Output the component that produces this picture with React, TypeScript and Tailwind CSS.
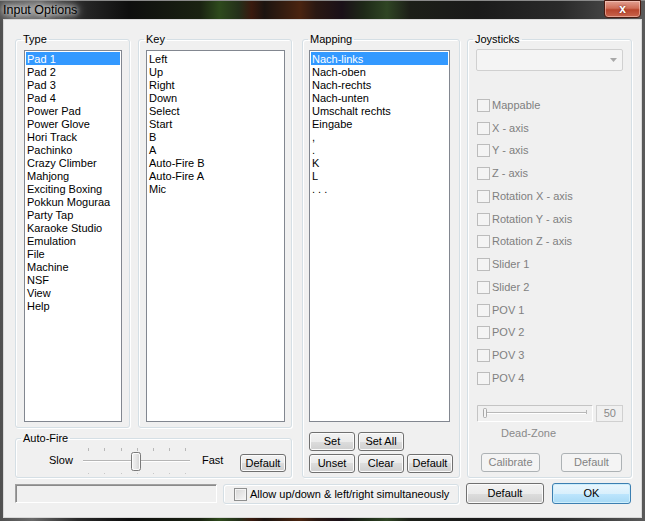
import React from "react";

const typeItems = [
  "Pad 1", "Pad 2", "Pad 3", "Pad 4", "Power Pad", "Power Glove", "Hori Track", "Pachinko",
  "Crazy Climber", "Mahjong", "Exciting Boxing", "Pokkun Moguraa", "Party Tap", "Karaoke Studio",
  "Emulation", "File", "Machine", "NSF", "View", "Help",
];
const keyItems = ["Left", "Up", "Right", "Down", "Select", "Start", "B", "A", "Auto-Fire B", "Auto-Fire A", "Mic"];
const mapItems = ["Nach-links", "Nach-oben", "Nach-rechts", "Nach-unten", "Umschalt rechts", "Eingabe", ",", ".", "K", "L", ". . ."];
const joyItems = [
  "Mappable", "X - axis", "Y - axis", "Z - axis", "Rotation X - axis", "Rotation Y - axis",
  "Rotation Z - axis", "Slider 1", "Slider 2", "POV 1", "POV 2", "POV 3", "POV 4",
];

function Group({ label, className, children }: { label?: string; className: string; children?: React.ReactNode }) {
  return (
    <fieldset className={`rounded-[3px] border border-[#d5dfe5] shadow-[inset_1px_1px_0_#ffffff,1px_1px_0_#ffffff] ${className}`}>
      {label ? <legend className="ml-[5px] px-[2px] text-[11px] leading-[13px] text-black">{label}</legend> : null}
      {children}
    </fieldset>
  );
}

function ListBox({ items, className, selected }: { items: string[]; className: string; selected?: number }) {
  return (
    <div className={`border border-[#828790] bg-white px-[1px] pt-[1px] ${className}`}>
      {items.map((t, i) => (
        <div
          key={i}
          className={`h-[13px] whitespace-nowrap pl-[1px] pt-[1px] text-[11px] leading-[12px] ${
            i === selected ? "bg-[#3399ff] text-white" : "text-black"
          }`}
        >
          {t}
        </div>
      ))}
    </div>
  );
}

function Btn({ children, className, disabled, primary }: { children: React.ReactNode; className: string; disabled?: boolean; primary?: boolean }) {
  let look =
    "border-[#707070] bg-[linear-gradient(#f2f2f2_0%,#ebebeb_50%,#dddddd_50%,#cfcfcf_100%)] shadow-[inset_0_0_0_1px_#fbfbfb] text-black";
  if (disabled) look = "border-[#adb2b5] bg-[#f4f4f4] text-[#838383]";
  if (primary)
    look =
      "border-[#3c7fb1] bg-[linear-gradient(#eaf6fd_0%,#d9f0fc_50%,#bee6fd_50%,#a7d9f5_100%)] shadow-[inset_0_0_0_1px_#cdeefc] text-black";
  return (
    <div className={`flex shrink-0 items-center justify-center rounded-[3px] border text-[11px] leading-[13px] ${look} ${className}`}>
      {children}
    </div>
  );
}

function Check({ disabled }: { disabled?: boolean }) {
  return (
    <div
      className={`h-[13px] w-[13px] shrink-0 border ${
        disabled
          ? "border-[#bcbcbc] bg-[#f4f4f4]"
          : "border-[#8e8f8f] bg-[linear-gradient(135deg,#d6d6d6,#f7f7f7)] shadow-[inset_0_0_0_1px_#f4f4f4]"
      }`}
    />
  );
}

function AutoFireSlider() {
  const ticks = [5, 21, 38, 54, 70, 86, 102];
  return (
    <svg width="107" height="30" viewBox="0 0 107 30" className="shrink-0">
      <defs>
        <linearGradient id="thumb" x1="0" y1="0" x2="1" y2="0">
          <stop offset="0" stopColor="#f4f4f4" />
          <stop offset="0.5" stopColor="#e6e6e6" />
          <stop offset="1" stopColor="#cfcfcf" />
        </linearGradient>
      </defs>
      {ticks.map((x) => (
        <line key={"t" + x} x1={x + 0.5} y1="3" x2={x + 0.5} y2="6" stroke="#b8b8b8" strokeWidth="1" />
      ))}
      {ticks.map((x) => (
        <line key={"b" + x} x1={x + 0.5} y1="28" x2={x + 0.5} y2="29" stroke="#c8c8c8" strokeWidth="1" />
      ))}
      <line x1="0" y1="15.5" x2="107" y2="15.5" stroke="#b5b5b5" strokeWidth="1" />
      <line x1="0" y1="16.5" x2="107" y2="16.5" stroke="#ffffff" strokeWidth="1" />
      <rect x="48.5" y="7.5" width="9" height="18" rx="2" fill="url(#thumb)" stroke="#7a7a7a" strokeWidth="1" />
      <rect x="49.5" y="8.5" width="7" height="16" rx="1.5" fill="none" stroke="#fbfbfb" strokeWidth="1" />
    </svg>
  );
}

function DeadZoneSlider() {
  return (
    <svg width="116" height="17" viewBox="0 0 116 17" className="shrink-0">
      <path d="M0.5 16.5 V0.5 H115.5" fill="none" stroke="#c4c4c4" strokeWidth="1" />
      <path d="M0.5 16.5 H115.5 V0.5" fill="none" stroke="#ffffff" strokeWidth="1" />
      <line x1="10" y1="7.5" x2="109" y2="7.5" stroke="#b8b8b8" strokeWidth="1" />
      <line x1="10" y1="8.5" x2="109" y2="8.5" stroke="#ffffff" strokeWidth="1" />
      <line x1="109.5" y1="5" x2="109.5" y2="9" stroke="#b8b8b8" strokeWidth="1" />
      <rect x="6.5" y="3.5" width="3" height="9" rx="1" fill="#f4f4f4" stroke="#a8a8a8" strokeWidth="1" />
    </svg>
  );
}

export default function App() {
  return (
    <div className="h-[521px] w-[645px] overflow-hidden bg-[#f0f0f0] font-['Liberation_Sans',Arial,sans-serif]">
      <div className="flex h-full w-full flex-col bg-[linear-gradient(90deg,#505050_0%,#6a6a6a_5%,#2a2a2a_12%,#0e0e0e_20%,#1a2212_31%,#2e4a1c_34%,#24301a_37%,#3a1a0e_39%,#1c1410_41%,#4a2410_46.5%,#2a1812_49%,#1a1018_53%,#1e2a18_56.5%,#2f4524_60%,#1c1f18_63.5%,#1a1a1a_74%,#2a2a2a_87%,#5a5a5a_100%)]">
        {/* Title bar */}
        <div className="flex h-[19px] shrink-0 items-start justify-between border-t border-[#8a8a8a]">
          <div className="pl-[3px] pt-[2px] text-[12.5px] leading-[15px] text-black [text-shadow:0_0_5px_#ffffff,0_0_9px_#ffffff,0_0_12px_rgba(255,255,255,0.8)]">
            Input Options
          </div>
          <div className="mr-[4px] mt-[-1px] flex h-[18px] w-[37px] items-center justify-center rounded-b-[4px] border border-[#4a1a10] bg-[linear-gradient(#e2a092_0%,#cf6e58_45%,#b8452d_55%,#c9654d_100%)] shadow-[inset_0_0_0_1px_rgba(255,220,210,0.5)]">
            <span className="text-[12px] font-bold leading-[12px] text-white [text-shadow:0_0_2px_#5a1a10]">x</span>
          </div>
        </div>

        {/* Client area */}
        <div className="mx-[3px] mb-[3px] flex-1 border border-[#d8d8d8] bg-[#f0f0f0] pl-[11px] pt-[13px] text-[11px] leading-[13px] text-black">
          <div className="flex h-[445px] items-start">
            {/* Left column */}
            <div className="flex w-[277px] flex-col">
              <div className="flex gap-[8px]">
                <Group label="Type" className="h-[395px] w-[115px]">
                  <ListBox items={typeItems} selected={0} className="ml-[8px] mt-[4px] h-[372px] w-[98px]" />
                </Group>
                <Group label="Key" className="h-[395px] w-[154px]">
                  <ListBox items={keyItems} className="ml-[7px] mt-[4px] h-[372px] w-[139px]" />
                </Group>
              </div>
              <Group label="Auto-Fire" className="mt-[4px] h-[46px] w-[277px]">
                <div className="flex h-[30px] items-center">
                  <span className="ml-[33px] w-[34px]">Slow</span>
                  <AutoFireSlider />
                  <span className="ml-[12px] w-[38px]">Fast</span>
                  <Btn className="mt-[6px] h-[18px] w-[46px]">Default</Btn>
                </div>
              </Group>
            </div>

            {/* Mapping */}
            <Group label="Mapping" className="ml-[10px] h-[445px] w-[158px]">
              <ListBox items={mapItems} selected={0} className="ml-[6px] mt-[4px] h-[372px] w-[141px]" />
              <div className="ml-[6px] mt-[10px] flex gap-[3px]">
                <Btn className="h-[19px] w-[46px]">Set</Btn>
                <Btn className="h-[19px] w-[46px]">Set All</Btn>
              </div>
              <div className="ml-[6px] mt-[3px] flex gap-[3px]">
                <Btn className="h-[19px] w-[46px]">Unset</Btn>
                <Btn className="h-[19px] w-[46px]">Clear</Btn>
                <Btn className="h-[19px] w-[46px]">Default</Btn>
              </div>
            </Group>

            {/* Joysticks */}
            <Group label="Joysticks" className="ml-[7px] h-[445px] w-[165px]">
              <div className="ml-[8px] mt-[3px] flex h-[22px] w-[147px] items-center justify-end rounded-[2px] border border-[#d0d0d0] bg-[#f4f4f4] pr-[5px]">
                <svg width="7" height="4" viewBox="0 0 7 4">
                  <path d="M0 0 H7 L3.5 4 Z" fill="#a8a8a8" />
                </svg>
              </div>
              <div className="ml-[9px] mt-[23px] flex flex-col">
                {joyItems.map((t) => (
                  <div key={t} className="flex h-[22.75px] items-center">
                    <Check disabled />
                    <span className="ml-[2px] whitespace-nowrap text-[#7f7f7f]">{t}</span>
                  </div>
                ))}
              </div>
              <div className="ml-[9px] mt-[15px] flex">
                <DeadZoneSlider />
                <div className="ml-[3px] flex h-[17px] w-[27px] items-center justify-end border border-[#d0d0d0] pr-[6px] text-[#8a8a8a]">
                  50
                </div>
              </div>
              <div className="mt-[5px] h-[13px] pl-[33px] text-[#8a8a8a]">Dead-Zone</div>
              <div className="mt-[13px] flex">
                <Btn disabled className="ml-[13px] h-[19px] w-[59px]">Calibrate</Btn>
                <Btn disabled className="ml-[21px] h-[19px] w-[61px]">Default</Btn>
              </div>
            </Group>
          </div>

          {/* Bottom row */}
          <div className="mt-[5px] flex items-start">
            <div className="mt-[1px] h-[19px] w-[202px] border border-b-white border-l-[#a0a0a0] border-r-white border-t-[#a0a0a0] shadow-[inset_1px_1px_0_#8a8a8a]" />
            <Group className="ml-[6px] mt-[1px] flex h-[20px] w-[236px] items-center">
              <div className="ml-[10px] flex items-center">
                <Check />
                <span className="ml-[3px] whitespace-nowrap">Allow up/down &amp; left/right simultaneously</span>
              </div>
            </Group>
            <Btn className="ml-[7px] h-[21px] w-[78px]">Default</Btn>
            <Btn primary className="ml-[8px] h-[21px] w-[79px]">OK</Btn>
          </div>
        </div>
      </div>
    </div>
  );
}
